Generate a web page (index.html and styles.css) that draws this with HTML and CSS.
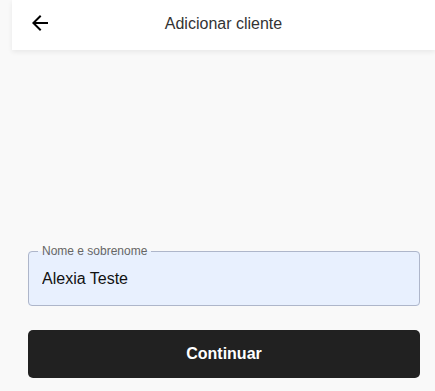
FILE: index.html
```html
<!DOCTYPE html>
<html lang="pt-BR">
<head>
<meta charset="utf-8">
<title>Adicionar cliente</title>
<link rel="stylesheet" href="styles.css">
</head>
<body>
<div class="app">
  <header class="topbar">
    <button class="back" aria-label="Voltar">
      <svg width="24" height="24" viewBox="0 0 24 24"><path d="M20 11H7.83l5.59-5.59L12 4l-8 8 8 8 1.41-1.41L7.83 13H20v-2z" fill="#000"/></svg>
    </button>
    <h1 class="title">Adicionar cliente</h1>
    <span class="spacer"></span>
  </header>
  <main class="content">
    <form class="form">
      <fieldset class="field">
        <legend class="field-label">Nome e sobrenome</legend>
        <input class="field-input" type="text" value="Alexia Teste">
      </fieldset>
      <button type="button" class="primary">Continuar</button>
    </form>
  </main>
</div>
</body>
</html>
```
FILE: styles.css
```css
* { box-sizing: border-box; }
html, body { margin: 0; height: 100%; }
body {
  background: #f9f9f9;
  font-family: "Liberation Sans", Arial, sans-serif;
}
.app {
  margin-left: 12px;
  min-height: 100vh;
  display: flex;
  flex-direction: column;
}
.topbar {
  height: 50px;
  background: #fff;
  display: grid;
  grid-template-columns: 1fr auto 1fr;
  align-items: center;
  padding: 0 16px 2px 16px;
  box-shadow: 0 2px 5px rgba(0,0,0,0.07);
  position: relative;
  z-index: 1;
}
.back {
  border: 0;
  background: none;
  padding: 0;
  margin-top: -2px;
  width: 24px;
  height: 24px;
  display: flex;
}
.title {
  margin: 0;
  font-size: 16px;
  font-weight: 400;
  color: #333;
}
.content {
  flex: 1;
  display: flex;
  flex-direction: column;
  justify-content: flex-end;
  padding: 0 15px 13px 16px;
}
.form {
  display: flex;
  flex-direction: column;
  gap: 24px;
}
.field {
  margin: 0;
  padding: 0;
  border: 1px solid #aeb6ca;
  border-radius: 4px;
  background: #e8f0fe;
  min-width: 0;
}
.field-label {
  margin-left: 9px;
  padding: 0 4px;
  font-size: 12px;
  line-height: 14px;
  color: #666;
}
.field-input {
  display: block;
  width: 100%;
  height: 47px;
  border: 0;
  background: transparent;
  padding: 0 13px 5px 13px;
  font-family: "Liberation Sans", Arial, sans-serif;
  font-size: 16px;
  color: #111;
  outline: none;
}
.primary {
  height: 48px;
  border: 0;
  border-radius: 5px;
  background: #212121;
  color: #fff;
  font-family: "Liberation Sans", Arial, sans-serif;
  font-size: 16px;
  font-weight: 700;
}
```
